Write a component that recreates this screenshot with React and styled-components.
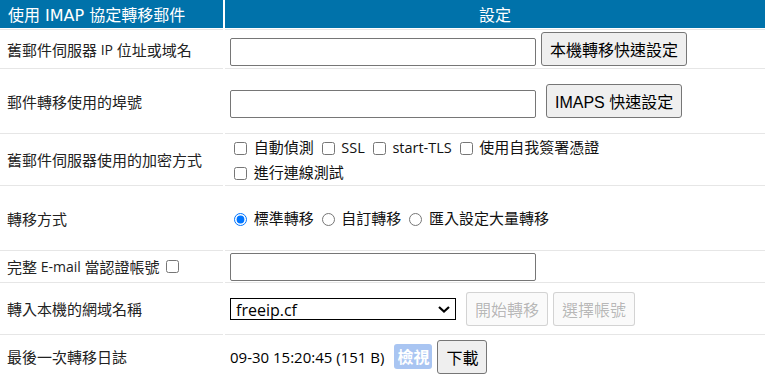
import React from "react";
import styled, { createGlobalStyle } from "styled-components";

const Global = createGlobalStyle`
  body {
    margin: 0;
    background: #fff;
    font-family: "Open Sans", "Noto Sans CJK TC", sans-serif;
    color: #222;
  }
`;

const Table = styled.div`
  width: 765px;
`;

const Row = styled.div`
  display: grid;
  grid-template-columns: 223px 1fr;
  column-gap: 2px;
  height: ${(p) => p.h}px;
`;

const HeadCell = styled.div`
  background: #0072aa;
  color: #fff;
  font-family: "DejaVu Sans", "Noto Sans CJK TC", sans-serif;
  font-size: 16px;
  display: flex;
  align-items: center;
  justify-content: ${(p) => (p.center ? "center" : "flex-start")};
  padding-left: ${(p) => (p.center ? 0 : 8)}px;
  margin-bottom: 1px;
`;

/* CJK runs are drawn a touch larger than the latin ones, as in the original */
const Zh = styled.span`
  font-family: "Noto Sans CJK TC", sans-serif;
  font-size: 15px;
`;

const Label = styled.div`
  border-top: 1px solid #e6e6e6;
  display: flex;
  align-items: center;
  padding-left: 7px;
  font-size: 14px;
  white-space: pre;
  input {
    margin: 0 0 0 7px;
    width: 13px;
    height: 13px;
  }
`;

const Value = styled.div`
  border-top: 1px solid #e6e6e6;
  display: flex;
  align-items: ${(p) => p.align || "center"};
  padding-left: 5px;
  padding-bottom: ${(p) => p.pb || 0}px;
  font-size: 14px;
`;

const Field = styled.input`
  width: 306px;
  height: 28px;
  box-sizing: border-box;
  border: 1px solid #767676;
  border-radius: 2px;
  margin: 0;
`;

const Btn = styled.button`
  font-family: "Liberation Sans", "Noto Sans CJK TC", sans-serif;
  font-size: 16px;
  height: 34px;
  padding: 0 8px;
  margin-left: ${(p) => p.ml ?? 5}px;
  background: #efefef;
  border: 1px solid #767676;
  border-radius: 3px;
  color: #000;
  &:disabled {
    background: rgba(239, 239, 239, 0.3);
    border-color: rgba(118, 118, 118, 0.3);
    color: rgba(16, 16, 16, 0.3);
  }
`;

const Options = styled.div`
  line-height: 24px;
  font-size: 14.5px;
  color: #111;
  input {
    margin: 0 3px 0 4px;
    vertical-align: -2px;
  }
`;

const SelectWrap = styled.div`
  position: relative;
  margin-right: 5px;
  svg {
    position: absolute;
    right: 6px;
    top: 8px;
    pointer-events: none;
  }
`;

const Select = styled.select`
  appearance: none;
  display: block;
  width: 226px;
  height: 22px;
  border: 1px solid #000;
  border-radius: 0;
  font-family: "Open Sans", sans-serif;
  font-size: 16px;
  padding: 0 0 0 5px;
  background: #fff;
  color: #000;
`;

const Stamp = styled.span`
  font-family: "Open Sans", sans-serif;
  font-size: 15px;
  color: #000;
  margin-right: 10px;
`;

const Badge = styled.span`
  background: #a9c5f2;
  color: #fff;
  font-family: "Noto Sans CJK TC", sans-serif;
  font-weight: 700;
  font-size: 16px;
  border-radius: 3px;
  height: 25px;
  line-height: 25px;
  padding: 0 3px;
`;

export default function App() {
  return (
    <>
      <Global />
      <Table>
        <Row h={29}>
          <HeadCell>使用 IMAP 協定轉移郵件</HeadCell>
          <HeadCell center>設定</HeadCell>
        </Row>
        <Row h={39}>
          <Label>
            <Zh>舊郵件伺服器</Zh> IP <Zh>位址或域名</Zh>
          </Label>
          <Value align="flex-end" pb={2}>
            <Field />
            <Btn>本機轉移快速設定</Btn>
          </Value>
        </Row>
        <Row h={65}>
          <Label>
            <Zh>郵件轉移使用的埠號</Zh>
          </Label>
          <Value align="flex-end" pb={15}>
            <Field />
            <Btn ml={10}>IMAPS 快速設定</Btn>
          </Value>
        </Row>
        <Row h={52}>
          <Label>
            <Zh>舊郵件伺服器使用的加密方式</Zh>
          </Label>
          <Value>
            <Options>
              <input type="checkbox" /> <Zh>自動偵測</Zh> <input type="checkbox" /> SSL{" "}
              <input type="checkbox" /> start-TLS <input type="checkbox" />{" "}
              <Zh>使用自我簽署憑證</Zh>
              <br />
              <input type="checkbox" /> <Zh>進行連線測試</Zh>
            </Options>
          </Value>
        </Row>
        <Row h={65}>
          <Label>
            <Zh>轉移方式</Zh>
          </Label>
          <Value>
            <Options>
              <input type="radio" name="m" defaultChecked /> <Zh>標準轉移</Zh>{" "}
              <input type="radio" name="m" /> <Zh>自訂轉移</Zh>{" "}
              <input type="radio" name="m" /> <Zh>匯入設定大量轉移</Zh>
            </Options>
          </Value>
        </Row>
        <Row h={32}>
          <Label>
            <Zh>完整</Zh> E-mail <Zh>當認證帳號</Zh>
            <input type="checkbox" />
          </Label>
          <Value>
            <Field />
          </Value>
        </Row>
        <Row h={52}>
          <Label>
            <Zh>轉入本機的網域名稱</Zh>
          </Label>
          <Value>
            <SelectWrap>
              <Select defaultValue="freeip.cf">
                <option>freeip.cf</option>
              </Select>
              <svg width="12" height="7" viewBox="0 0 12 7">
                <path d="M1 1l5 4.5L11 1" fill="none" stroke="#000" strokeWidth="2.2" />
              </svg>
            </SelectWrap>
            <Btn disabled>開始轉移</Btn>
            <Btn disabled>選擇帳號</Btn>
          </Value>
        </Row>
        <Row h={44}>
          <Label>
            <Zh>最後一次轉移日誌</Zh>
          </Label>
          <Value>
            <Stamp>09-30 15:20:45 (151 B)</Stamp>
            <Badge>檢視</Badge>
            <Btn>下載</Btn>
          </Value>
        </Row>
      </Table>
    </>
  );
}
